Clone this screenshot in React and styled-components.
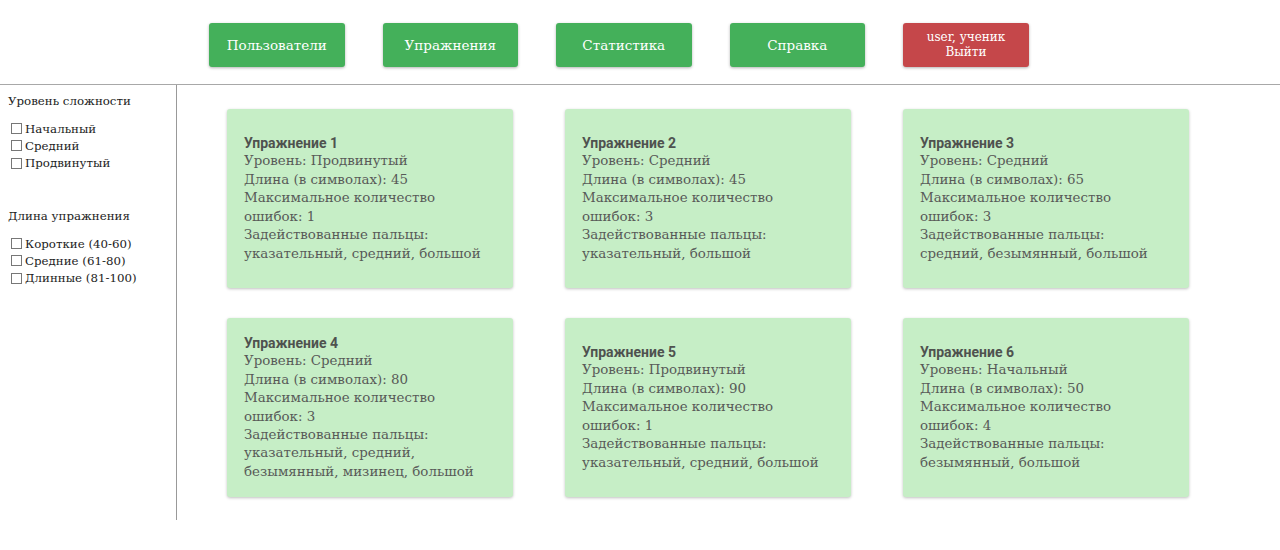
import React from "react";
import styled, { createGlobalStyle } from "styled-components";

const GlobalStyle = createGlobalStyle`
    body {
        margin: 0;
        background: #fff;
        font-family: "DejaVu Serif", "Liberation Serif", serif;
    }
`;

const Header = styled.div`
    display: flex;
    gap: 38px;
    height: 85px;
    box-sizing: border-box;
    padding: 23px 0 0 209px;
    border-bottom: 1px solid #a8a8a8;
`;

const NavButton = styled.div`
    display: flex;
    flex-direction: column;
    justify-content: center;
    align-items: center;
    width: ${props => (props.wide ? 126 : 135.5)}px;
    height: 44px;
    border-radius: 3px;
    background-color: ${props => (props.danger ? "#c5474a" : "#44b05a")};
    box-shadow: 0 1px 3px rgba(0, 0, 0, 0.3);
    color: #fff;
    font-family: "DejaVu Serif", serif;
    font-size: ${props => (props.danger ? 12 : 13.5)}px;
    line-height: 15px;
    text-align: center;
    cursor: pointer;
`;

const Body = styled.div`
    display: flex;
    align-items: flex-start;
`;

const Sidebar = styled.div`
    width: 177px;
    height: 435px;
    box-sizing: border-box;
    padding: 8px 0 0 8px;
    border-right: 1px solid #999;
    color: #222;
    font-size: 11.8px;
    h4 {
        margin: 0 0 11px;
        font-weight: normal;
        font-size: 11.8px;
        line-height: 16px;
    }
`;

const FilterGroup = styled.div`
    margin-bottom: 36px;
`;

const Check = styled.label`
    display: flex;
    align-items: center;
    height: 17.3px;
    padding-left: 3px;
    span {
        width: 9px;
        height: 9px;
        border: 1px solid #777;
        margin-right: 3px;
    }
`;

const Grid = styled.div`
    display: grid;
    grid-template-columns: repeat(3, 286px);
    align-content: start;
    column-gap: 52px;
    row-gap: 30px;
    padding: 24px 0 0 50px;
`;

const Card = styled.div`
    display: flex;
    flex-direction: column;
    justify-content: center;
    height: 179px;
    box-sizing: border-box;
    padding: 0 17px;
    border-radius: 3px;
    background-color: #c6eec6;
    box-shadow: 0 1px 3px rgba(0, 0, 0, 0.25);
    color: #585a58;
    font-size: 13.4px;
    line-height: 18.4px;
    strong {
        font-family: Roboto, sans-serif;
        font-size: 14px;
        font-weight: bold;
        color: #4f524f;
    }
`;

const exercises = [
    { n: 1, level: "Продвинутый", len: 45, err: 1, fingers: "указательный, средний, большой" },
    { n: 2, level: "Средний", len: 45, err: 3, fingers: "указательный, большой" },
    { n: 3, level: "Средний", len: 65, err: 3, fingers: "средний, безымянный, большой" },
    { n: 4, level: "Средний", len: 80, err: 3, fingers: "указательный, средний, безымянный, мизинец, большой" },
    { n: 5, level: "Продвинутый", len: 90, err: 1, fingers: "указательный, средний, большой" },
    { n: 6, level: "Начальный", len: 50, err: 4, fingers: "безымянный, большой" },
];

export default function App() {
    return (
        <>
            <GlobalStyle />
            <Header>
                <NavButton>Пользователи</NavButton>
                <NavButton>Упражнения</NavButton>
                <NavButton>Статистика</NavButton>
                <NavButton>Справка</NavButton>
                <NavButton danger wide>
                    <div>user, ученик</div>
                    <div>Выйти</div>
                </NavButton>
            </Header>
            <Body>
                <Sidebar>
                    <FilterGroup>
                        <h4>Уровень сложности</h4>
                        <Check><span />Начальный</Check>
                        <Check><span />Средний</Check>
                        <Check><span />Продвинутый</Check>
                    </FilterGroup>
                    <FilterGroup>
                        <h4>Длина упражнения</h4>
                        <Check><span />Короткие (40-60)</Check>
                        <Check><span />Средние (61-80)</Check>
                        <Check><span />Длинные (81-100)</Check>
                    </FilterGroup>
                </Sidebar>
                <Grid>
                    {exercises.map(item => (
                        <Card key={item.n}>
                            <strong>{`Упражнение ${item.n}`}</strong>
                            <div>{`Уровень: ${item.level}`}</div>
                            <div>{`Длина (в символах): ${item.len}`}</div>
                            <div>{`Максимальное количество ошибок: ${item.err}`}</div>
                            <div>{`Задействованные пальцы: ${item.fingers}`}</div>
                        </Card>
                    ))}
                </Grid>
            </Body>
        </>
    );
}
